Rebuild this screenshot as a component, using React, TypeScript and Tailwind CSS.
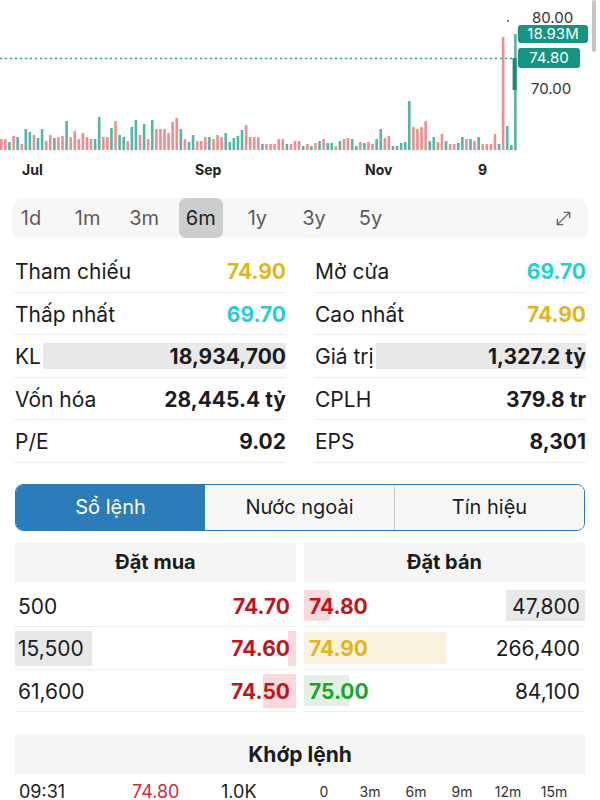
import { MoveDiagonal } from 'lucide-react';

// [height, isUp]
const bars: [number, number][] = [
  [11, 0], [11, 0], [8, 1], [14, 0], [13, 1], [6, 0], [21, 1], [18, 1], [15, 0], [12, 1],
  [21, 1], [9, 0], [15, 0], [12, 1], [13, 0], [14, 0], [29, 1], [13, 0], [19, 0], [11, 0],
  [17, 0], [13, 0], [11, 0], [11, 1], [33, 1], [13, 0], [13, 0], [22, 1], [29, 0], [15, 1],
  [13, 1], [9, 0], [23, 1], [30, 1], [15, 0], [26, 1], [11, 0], [30, 1], [21, 0], [21, 0],
  [21, 0], [17, 0], [28, 0], [32, 0], [21, 1], [11, 0], [8, 1], [15, 1], [9, 0], [9, 0],
  [13, 0], [13, 1], [11, 0], [15, 0], [13, 0], [17, 1], [8, 1], [12, 1], [14, 1], [20, 1],
  [25, 0], [13, 0], [13, 0], [13, 0], [6, 1], [6, 0], [6, 0], [6, 0], [11, 0], [11, 0],
  [6, 1], [6, 0], [9, 0], [9, 0], [4, 1], [6, 0], [4, 1], [7, 0], [9, 1], [11, 0],
  [7, 1], [7, 1], [4, 0], [9, 1], [11, 0], [12, 0], [11, 1], [4, 1], [8, 0], [7, 1],
  [8, 0], [6, 0], [11, 1], [21, 1], [12, 0], [14, 0], [4, 1], [4, 1], [7, 1], [8, 1],
  [49, 1], [23, 0], [21, 0], [23, 0], [29, 0], [9, 1], [13, 1], [8, 0], [16, 0], [9, 1],
  [6, 0], [6, 0], [7, 1], [13, 1], [11, 0], [11, 1], [9, 0], [13, 1], [6, 0], [6, 0],
  [6, 0], [16, 0], [6, 1], [113, 0], [24, 1], [5, 1], [116, 1],
];

const ranges = ['1d', '1m', '3m', '6m', '1y', '3y', '5y'];

const stats: { label: string; value: string; color: string; bar?: string }[][] = [
  [
    { label: 'Tham chiếu', value: '74.90', color: 'text-[#e3b51c]' },
    { label: 'Mở cửa', value: '69.70', color: 'text-[#22cfd2]' },
  ],
  [
    { label: 'Thấp nhất', value: '69.70', color: 'text-[#22cfd2]' },
    { label: 'Cao nhất', value: '74.90', color: 'text-[#e3b51c]' },
  ],
  [
    { label: 'KL', value: '18,934,700', color: 'text-[#1c1c1c]', bar: 'w-[243px]' },
    { label: 'Giá trị', value: '1,327.2 tỷ', color: 'text-[#1c1c1c]', bar: 'w-[210px]' },
  ],
  [
    { label: 'Vốn hóa', value: '28,445.4 tỷ', color: 'text-[#1c1c1c]' },
    { label: 'CPLH', value: '379.8 tr', color: 'text-[#1c1c1c]' },
  ],
  [
    { label: 'P/E', value: '9.02', color: 'text-[#1c1c1c]' },
    { label: 'EPS', value: '8,301', color: 'text-[#1c1c1c]' },
  ],
];

const bids = [
  { qty: '500', price: '74.70', qtyBar: '', priceBar: '' },
  { qty: '15,500', price: '74.60', qtyBar: 'w-[77px]', priceBar: 'w-[8px]' },
  { qty: '61,600', price: '74.50', qtyBar: '', priceBar: 'w-[33px]' },
];

const asks = [
  { price: '74.80', qty: '47,800', color: 'text-[#c3141c]', priceBar: 'w-[26px] bg-[#fadadd]', qtyBar: 'w-[79px]' },
  { price: '74.90', qty: '266,400', color: 'text-[#e3b51c]', priceBar: 'w-[142px] bg-[#f8f3dc]', qtyBar: '' },
  { price: '75.00', qty: '84,100', color: 'text-[#1aa52b]', priceBar: 'w-[45px] bg-[#e2f2e2]', qtyBar: '' },
];

function PriceChart() {
  return (
    <div className="relative h-[188px]">
      <svg className="absolute left-0 top-0" width="600" height="188">
        <line x1="0" y1="58.5" x2="515" y2="58.5" stroke="#2a9d8f" strokeWidth="1.5" strokeDasharray="2 3" />
        {bars.map(([h, up], i) => (
          <rect key={i} x={i * 4.08} y={150 - h} width="2.6" height={h} fill={up ? '#52b7a7' : '#f38d8d'} />
        ))}
        <rect x="512.6" y="58" width="4" height="32" fill="#17897a" />
        <circle cx="508" cy="21" r="1" fill="#555" />
      </svg>

      <span className="absolute left-[532px] top-[10px] text-[15px] leading-[15px] text-[#333]">80.00</span>
      <div className="absolute left-[518px] top-[25px] flex h-[18px] w-[70px] items-center justify-center rounded-[3px] bg-[#169482] text-[15px] text-white">
        18.93M
      </div>
      <div className="absolute left-[518px] top-[48px] flex h-[20px] w-[62px] items-center justify-center rounded-[3px] bg-[#169482] text-[15px] text-white">
        74.80
      </div>
      <span className="absolute left-[531px] top-[80px] text-[15px] leading-[18px] text-[#333]">70.00</span>
      <div className="absolute left-[592px] top-0 h-[52px] w-[4px] rounded-full bg-[#c4c4c4]" />

      <span className="absolute left-[22px] top-[159px] text-[14px] font-bold text-[#222]">Jul</span>
      <span className="absolute left-[195px] top-[159px] text-[14px] font-bold text-[#222]">Sep</span>
      <span className="absolute left-[365px] top-[159px] text-[14px] font-bold text-[#222]">Nov</span>
      <span className="absolute left-[478px] top-[159px] text-[14px] font-bold text-[#222]">9</span>
    </div>
  );
}

export default function App() {
  return (
    <div className="h-[800px] w-[600px] overflow-hidden bg-white font-['Inter',sans-serif] text-[#1c1c1c]">
      <PriceChart />

      {/* Range selector */}
      <div className="mx-[12px] mt-[10px] flex h-[40px] items-center rounded-[10px] bg-[#f7f7f7] pr-[14px]">
        <div className="ml-[-3px] flex h-full items-center gap-[12.6px]">
          {ranges.map((r) => (
            <div
              key={r}
              className={`flex h-full w-[44px] items-center justify-center rounded-[7px] text-[20px] ${
                r === '6m' ? 'bg-[#cdcdcd] text-[#222]' : 'text-[#5c5c5c]'
              }`}
            >
              {r}
            </div>
          ))}
        </div>
        <MoveDiagonal className="ml-auto h-[21px] w-[21px] text-[#666]" strokeWidth={1.6} />
      </div>

      {/* Stats */}
      <div className="mt-[12px] grid grid-cols-2 gap-x-[28px] px-[14px]">
        {stats.map((row, ri) =>
          row.map((s, ci) => (
            <div
              key={`${ri}-${ci}`}
              className="relative flex h-[42.6px] items-center justify-between border-b border-[#ececec] pl-[1px] pt-[2px]"
            >
              {s.bar && <div className={`absolute right-0 top-[8px] bottom-[8px] bg-[#e9e9e9] ${s.bar}`} />}
              <span className="relative text-[21px]">{s.label}</span>
              <span className={`relative text-[21px] font-bold ${s.color}`}>{s.value}</span>
            </div>
          ))
        )}
      </div>

      {/* Segmented control */}
      <div className="mx-[15px] mt-[21px] flex h-[47px] overflow-hidden rounded-[8px] border border-[#2b7cb9] text-[20px]">
        <div className="flex w-[189px] items-center justify-center bg-[#2b7cb9] text-white">Sổ lệnh</div>
        <div className="flex w-[190px] items-center justify-center border-r border-[#c9c9c9] bg-[#f7f7f7]">Nước ngoài</div>
        <div className="flex flex-1 items-center justify-center bg-[#f7f7f7]">Tín hiệu</div>
      </div>

      {/* Order book */}
      <div className="mt-[11px] grid grid-cols-2 gap-x-[8px] px-[15px]">
        <div className="flex h-[40px] items-center justify-center bg-[#f5f5f5] text-[20px] font-bold">Đặt mua</div>
        <div className="flex h-[40px] items-center justify-center bg-[#f5f5f5] text-[20px] font-bold">Đặt bán</div>

        <div className="mt-[3px]">
          {bids.map((b) => (
            <div key={b.price} className="relative flex h-[42.5px] items-center justify-between border-b border-[#efefef] pl-[3px] pr-[6px] pt-[2px]">
              {b.qtyBar && <div className={`absolute left-0 top-[4px] bottom-[3px] bg-[#e8e8e8] ${b.qtyBar}`} />}
              {b.priceBar && <div className={`absolute right-0 top-[4px] bottom-[3px] bg-[#fad9dc] ${b.priceBar}`} />}
              <span className="relative text-[21px]">{b.qty}</span>
              <span className="relative text-[21px] font-bold text-[#c3141c]">{b.price}</span>
            </div>
          ))}
        </div>
        <div className="mt-[3px]">
          {asks.map((a) => (
            <div key={a.price} className="relative flex h-[42.5px] items-center justify-between border-b border-[#efefef] pl-[5px] pr-[5px] pt-[2px]">
              <div className={`absolute left-0 top-[5px] bottom-[5px] ${a.priceBar}`} />
              {a.qtyBar && <div className={`absolute right-0 top-[5px] bottom-[5px] bg-[#e8e8e8] ${a.qtyBar}`} />}
              <span className={`relative text-[21px] font-bold ${a.color}`}>{a.price}</span>
              <span className="relative text-[21px]">{a.qty}</span>
            </div>
          ))}
        </div>
      </div>

      {/* Matched orders */}
      <div className="mx-[15px] mt-[22px] flex h-[40px] items-center justify-center bg-[#f5f5f5] text-[21px] font-bold">
        Khớp lệnh
      </div>
      <div className="mt-[6px] flex items-center px-[19px] leading-[24px]">
        <span className="w-[113px] text-[18px]">09:31</span>
        <span className="w-[89px] text-[18px] text-[#cc2f36]">74.80</span>
        <span className="w-[80px] text-[18px]">1.0K</span>
        {['0', '3m', '6m', '9m', '12m', '15m'].map((t) => (
          <span key={t} className="w-[46px] text-center text-[14px] text-[#333]">
            {t}
          </span>
        ))}
      </div>
    </div>
  );
}
